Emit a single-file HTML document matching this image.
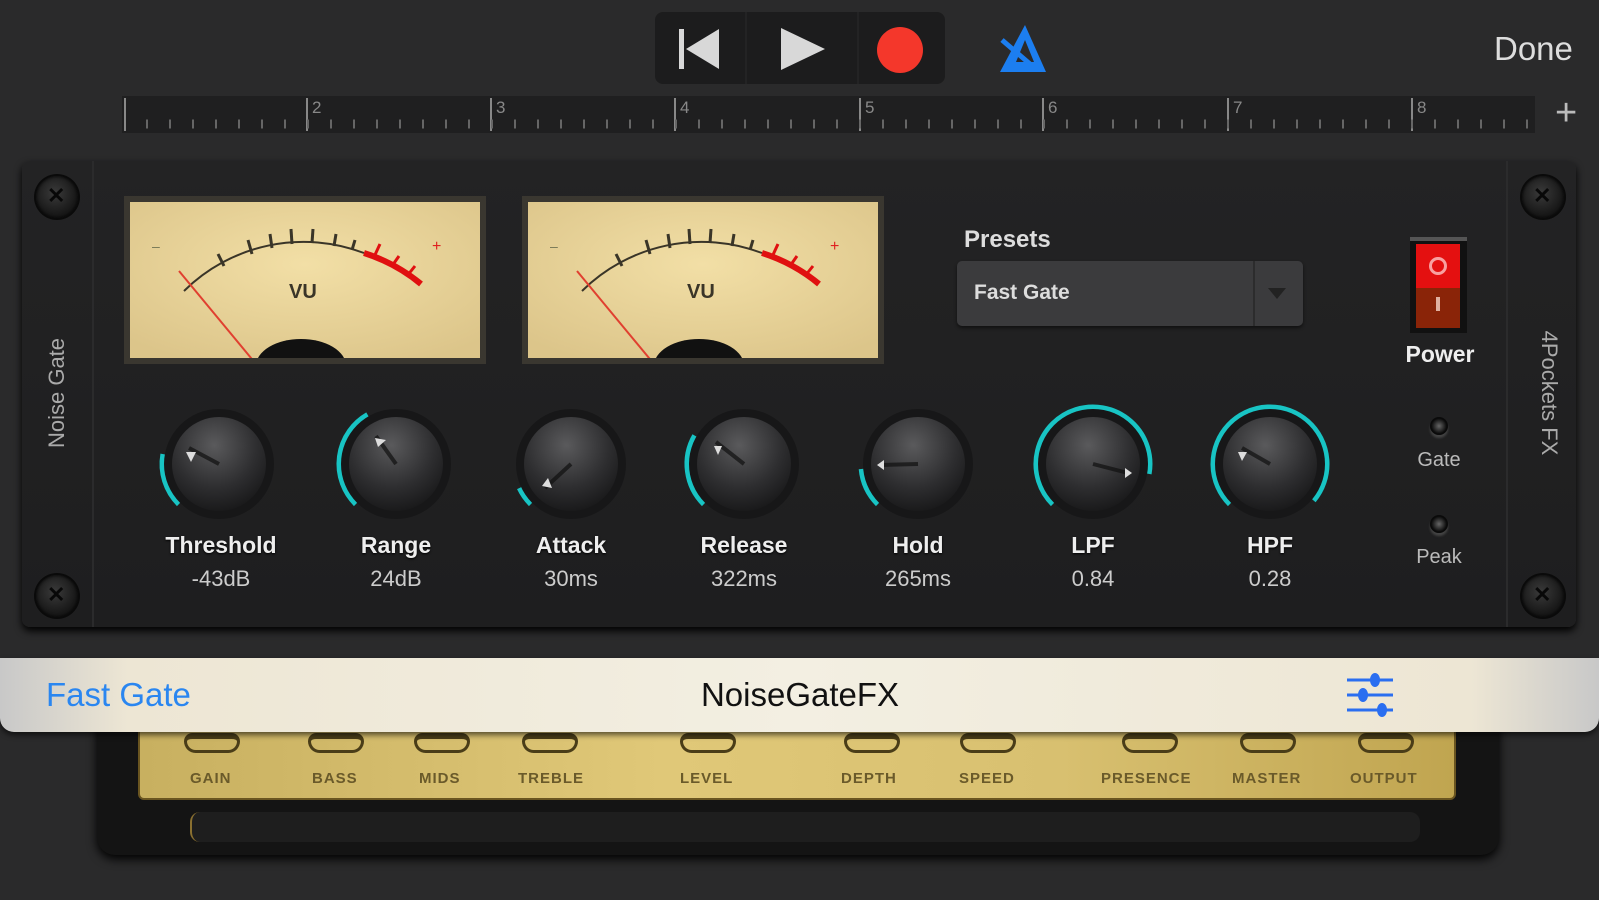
<!DOCTYPE html>
<html><head><meta charset="utf-8"><style>
*{margin:0;padding:0;box-sizing:border-box}
body{width:1599px;height:900px;background:#2a2a2b;position:relative;overflow:hidden;font-family:"Liberation Sans",sans-serif}
.a{position:absolute}
.lbl{position:absolute;color:#eee;font-weight:bold;font-size:23px;text-align:center;width:160px;text-shadow:0 1px 2px #000}
.val{position:absolute;color:#ccc;font-size:22px;text-align:center;width:160px}
.screw{position:absolute;width:42px;height:42px;border-radius:50%;background:radial-gradient(circle at 45% 40%,#3a3a3a,#1a1a1a 60%,#0c0c0c);box-shadow:0 0 0 2px #0a0a0a,inset 0 0 3px #000}
.screw:after{content:"✕";position:absolute;left:11px;top:7px;color:#080808;font-size:22px;font-weight:bold}
.amplbl{position:absolute;top:770px;font-size:15px;font-weight:bold;color:#6a5a2a;letter-spacing:1px}
.pot{position:absolute;top:733px;width:56px;height:20px;border:3px solid #4a3d18;border-top:6px solid #4a3d18;border-radius:10px 10px 14px 14px}
</style></head><body>
<div class="a" style="left:655px;top:12px;width:290px;height:72px;background:#1c1c1d;border-radius:8px"></div>
<div class="a" style="left:745px;top:12px;width:2px;height:72px;background:#232324"></div>
<div class="a" style="left:857px;top:12px;width:2px;height:72px;background:#232324"></div>
<svg class="a" style="left:0;top:0" width="1599" height="100">
<rect x="679" y="29" width="5" height="40" fill="#d8d8d8"/><polygon points="719,29 719,69 686,49" fill="#d8d8d8"/>
<polygon points="781,28 781,70 825,49" fill="#d8d8d8"/>
<circle cx="900" cy="50" r="23" fill="#f4372b"/>
<polygon points="1025,25 1046,72 1000,72" fill="#1c7ef0"/>
<polygon points="1025,40 1034,62 1016,62" fill="#2a2a2b"/>
<line x1="1002" y1="40" x2="1030" y2="64" stroke="#1c7ef0" stroke-width="5"/>
</svg>
<div class="a" style="left:1494px;top:30px;color:#ddd;font-size:33px">Done</div>
<div class="a" style="left:122px;top:96px;width:1413px;height:37px;background:#1f1f20"></div>
<svg class="a" style="left:0;top:96px" width="1599" height="40">
<g stroke="#888" stroke-width="2">
<line x1="125" y1="2" x2="125" y2="35"/><line x1="307" y1="2" x2="307" y2="35"/><line x1="491" y1="2" x2="491" y2="35"/><line x1="675" y1="2" x2="675" y2="35"/><line x1="860" y1="2" x2="860" y2="35"/><line x1="1043" y1="2" x2="1043" y2="35"/><line x1="1228" y1="2" x2="1228" y2="35"/><line x1="1412" y1="2" x2="1412" y2="35"/>
</g>
<g stroke="#666" stroke-dasharray="2 21">
<line x1="146" y1="28" x2="1530" y2="28" stroke-width="9"/>
</g>
<g fill="#888" font-size="17"><text x="312" y="17">2</text><text x="496" y="17">3</text><text x="680" y="17">4</text><text x="865" y="17">5</text><text x="1048" y="17">6</text><text x="1233" y="17">7</text><text x="1417" y="17">8</text></g>
</svg>
<div class="a" style="left:1555px;top:92px;color:#bbb;font-size:38px">+</div>
<div class="a" style="left:22px;top:161px;width:1554px;height:466px;background:linear-gradient(#232324,#1e1e1f);border-radius:8px;box-shadow:0 4px 8px #000"></div>
<div class="a" style="left:92px;top:161px;width:2px;height:466px;background:#2b2b2c"></div>
<div class="a" style="left:1506px;top:161px;width:2px;height:466px;background:#2b2b2c"></div>
<div class="screw" style="left:36px;top:176px"></div><div class="screw" style="left:36px;top:575px"></div>
<div class="screw" style="left:1522px;top:176px"></div><div class="screw" style="left:1522px;top:575px"></div>
<div class="a" style="left:-3px;top:380px;width:120px;transform:rotate(-90deg);color:#aaa;font-size:22px;text-align:center">Noise Gate</div>
<div class="a" style="left:1479px;top:380px;width:140px;transform:rotate(90deg);color:#aaa;font-size:22px;text-align:center">4Pockets FX</div>
<svg class="a" style="left:124px;top:196px" width="362" height="168">
<defs><radialGradient id="vg" cx="50%" cy="40%" r="70%"><stop offset="0" stop-color="#f2dfa6"/><stop offset="1" stop-color="#dcc58a"/></radialGradient><clipPath id="vc"><rect x="6" y="6" width="350" height="156"/></clipPath></defs>
<rect width="362" height="168" fill="#3a3730"/><rect x="6" y="6" width="350" height="156" fill="url(#vg)"/>
<g clip-path="url(#vc)">
<path d="M60,95 A170,170 0 0 1 240,57" fill="none" stroke="#3a3528" stroke-width="2"/>
<path d="M240,57 A170,170 0 0 1 297,88" fill="none" stroke="#e01010" stroke-width="6"/>
<g stroke="#3a3528" stroke-width="3"><line x1="100" y1="70" x2="94" y2="58"/><line x1="128" y1="58" x2="124" y2="44"/><line x1="148" y1="52" x2="146" y2="38"/><line x1="168" y1="48" x2="167" y2="33"/><line x1="188" y1="47" x2="189" y2="33"/><line x1="210" y1="50" x2="212" y2="38"/><line x1="228" y1="54" x2="231" y2="44"/></g>
<g stroke="#e01010" stroke-width="3"><line x1="250" y1="61" x2="256" y2="48"/><line x1="268" y1="70" x2="275" y2="60"/><line x1="283" y1="80" x2="291" y2="70"/></g>
<text x="165" y="102" font-size="20" font-weight="bold" fill="#3a3528">VU</text>
<text x="28" y="55" font-size="14" fill="#775">–</text><text x="308" y="55" font-size="16" fill="#e02020">+</text>
<line x1="55" y1="75" x2="132" y2="168" stroke="#e04030" stroke-width="2"/>
<ellipse cx="177" cy="170" rx="45" ry="27" fill="#111"/>
</g></svg>
<svg class="a" style="left:522px;top:196px" width="362" height="168">
<rect width="362" height="168" fill="#3a3730"/><rect x="6" y="6" width="350" height="156" fill="url(#vg)"/>
<g clip-path="url(#vc)">
<path d="M60,95 A170,170 0 0 1 240,57" fill="none" stroke="#3a3528" stroke-width="2"/>
<path d="M240,57 A170,170 0 0 1 297,88" fill="none" stroke="#e01010" stroke-width="6"/>
<g stroke="#3a3528" stroke-width="3"><line x1="100" y1="70" x2="94" y2="58"/><line x1="128" y1="58" x2="124" y2="44"/><line x1="148" y1="52" x2="146" y2="38"/><line x1="168" y1="48" x2="167" y2="33"/><line x1="188" y1="47" x2="189" y2="33"/><line x1="210" y1="50" x2="212" y2="38"/><line x1="228" y1="54" x2="231" y2="44"/></g>
<g stroke="#e01010" stroke-width="3"><line x1="250" y1="61" x2="256" y2="48"/><line x1="268" y1="70" x2="275" y2="60"/><line x1="283" y1="80" x2="291" y2="70"/></g>
<text x="165" y="102" font-size="20" font-weight="bold" fill="#3a3528">VU</text>
<text x="28" y="55" font-size="14" fill="#775">–</text><text x="308" y="55" font-size="16" fill="#e02020">+</text>
<line x1="55" y1="75" x2="132" y2="168" stroke="#e04030" stroke-width="2"/>
<ellipse cx="177" cy="170" rx="45" ry="27" fill="#111"/>
</g></svg>
<div class="a" style="left:964px;top:226px;color:#ddd;font-weight:bold;font-size:24px">Presets</div>
<div class="a" style="left:957px;top:261px;width:346px;height:65px;background:#3b3b3d;border-radius:5px;box-shadow:0 2px 3px #111"></div>
<div class="a" style="left:1253px;top:261px;width:2px;height:65px;background:#2c2c2d"></div>
<div class="a" style="left:974px;top:281px;color:#ddd;font-weight:bold;font-size:21px">Fast Gate</div>
<div class="a" style="left:1268px;top:288px;width:0;height:0;border-left:9px solid transparent;border-right:9px solid transparent;border-top:11px solid #222"></div>
<div class="a" style="left:1410px;top:237px;width:57px;height:96px;background:#111;border-top:4px solid #555"></div>
<div class="a" style="left:1416px;top:244px;width:44px;height:44px;background:#e41010"></div>
<div class="a" style="left:1416px;top:288px;width:44px;height:40px;background:#8a2408"></div>
<div class="a" style="left:1429px;top:257px;width:18px;height:18px;border:3px solid #f8a0a0;border-radius:50%"></div>
<div class="a" style="left:1436px;top:297px;width:4px;height:14px;background:#e0b0a0"></div>
<div class="a" style="left:1390px;top:341px;width:100px;text-align:center;color:#eee;font-weight:bold;font-size:23px">Power</div>
<div class="a" style="left:1430px;top:417px;width:18px;height:18px;border-radius:50%;background:radial-gradient(#666,#0a0a0a 60%);box-shadow:0 3px 2px #444"></div>
<div class="a" style="left:1399px;top:449px;width:80px;text-align:center;color:#bbb;font-size:20px">Gate</div>
<div class="a" style="left:1430px;top:515px;width:18px;height:18px;border-radius:50%;background:radial-gradient(#666,#0a0a0a 60%);box-shadow:0 3px 2px #444"></div>
<div class="a" style="left:1399px;top:546px;width:80px;text-align:center;color:#bbb;font-size:20px">Peak</div>
<svg class="a" style="left:0;top:0" width="1599" height="640">
<defs><radialGradient id="kg" cx="45%" cy="30%" r="75%"><stop offset="0" stop-color="#5a5a5c"/><stop offset=".6" stop-color="#2e2e30"/><stop offset="1" stop-color="#161617"/></radialGradient></defs>
<g fill="none" stroke="#18c4c4" stroke-width="5">
<path d="M178.7,504.3 A57,57 0 0 1 162.9,454.1"/>
<path d="M355.7,504.3 A57,57 0 0 1 367.5,414.6"/>
<path d="M530.7,504.3 A57,57 0 0 1 519.3,488.1"/>
<path d="M703.7,504.3 A57,57 0 0 1 694.6,435.5"/>
<path d="M877.7,504.3 A57,57 0 0 1 861.2,469"/>
<path d="M1052.7,504.3 A57,57 0 1 1 1149.1,473.9"/>
<path d="M1229.7,504.3 A57,57 0 1 1 1313.7,500.6"/>
</g>
<g>
<circle cx="219" cy="464" r="55" fill="#171718"/><circle cx="219" cy="464" r="47" fill="url(#kg)"/>
<circle cx="396" cy="464" r="55" fill="#171718"/><circle cx="396" cy="464" r="47" fill="url(#kg)"/>
<circle cx="571" cy="464" r="55" fill="#171718"/><circle cx="571" cy="464" r="47" fill="url(#kg)"/>
<circle cx="744" cy="464" r="55" fill="#171718"/><circle cx="744" cy="464" r="47" fill="url(#kg)"/>
<circle cx="918" cy="464" r="55" fill="#171718"/><circle cx="918" cy="464" r="47" fill="url(#kg)"/>
<circle cx="1093" cy="464" r="55" fill="#171718"/><circle cx="1093" cy="464" r="47" fill="url(#kg)"/>
<circle cx="1270" cy="464" r="55" fill="#171718"/><circle cx="1270" cy="464" r="47" fill="url(#kg)"/>
</g>
<g stroke="#101010" stroke-width="4" opacity=".7">
<line x1="219" y1="464" x2="189" y2="448"/><line x1="396" y1="464" x2="376" y2="436"/><line x1="571" y1="464" x2="545" y2="488"/><line x1="744" y1="464" x2="716" y2="442"/><line x1="918" y1="464" x2="880" y2="465"/><line x1="1093" y1="464" x2="1128" y2="473"/><line x1="1270" y1="464" x2="1242" y2="448"/>
</g>
<g fill="#ddd">
<polygon points="186,452 196,452 191,462"/>
<polygon points="375,438 386,440 378,447"/>
<polygon points="542,486 548,478 552,488"/>
<polygon points="714,446 722,446 718,455"/>
<polygon points="884,460 884,470 877,465"/>
<polygon points="1125,468 1125,478 1132,473"/>
<polygon points="1238,452 1247,452 1242,461"/>
</g>
</svg>
<div class="lbl" style="left:141px;top:532px">Threshold</div><div class="val" style="left:141px;top:566px">-43dB</div>
<div class="lbl" style="left:316px;top:532px">Range</div><div class="val" style="left:316px;top:566px">24dB</div>
<div class="lbl" style="left:491px;top:532px">Attack</div><div class="val" style="left:491px;top:566px">30ms</div>
<div class="lbl" style="left:664px;top:532px">Release</div><div class="val" style="left:664px;top:566px">322ms</div>
<div class="lbl" style="left:838px;top:532px">Hold</div><div class="val" style="left:838px;top:566px">265ms</div>
<div class="lbl" style="left:1013px;top:532px">LPF</div><div class="val" style="left:1013px;top:566px">0.84</div>
<div class="lbl" style="left:1190px;top:532px">HPF</div><div class="val" style="left:1190px;top:566px">0.28</div>
<div class="a" style="left:97px;top:700px;width:1402px;height:155px;background:#141414;border-radius:0 0 18px 18px;box-shadow:0 4px 10px #000"></div>
<div class="a" style="left:138px;top:700px;width:1318px;height:100px;background:linear-gradient(90deg,#c8b060,#e0c878 40%,#d8c070 70%,#c0a550);border-radius:0 0 6px 6px;border:2px solid #6a5520"></div>
<div class="a" style="left:190px;top:812px;width:1230px;height:30px;background:#1e1e1e;border-radius:10px;border-left:2px solid #8a7030"></div>
<div class="pot" style="left:184px"></div><div class="pot" style="left:308px"></div><div class="pot" style="left:414px"></div><div class="pot" style="left:522px"></div><div class="pot" style="left:680px"></div><div class="pot" style="left:844px"></div><div class="pot" style="left:960px"></div><div class="pot" style="left:1122px"></div><div class="pot" style="left:1240px"></div><div class="pot" style="left:1358px"></div>
<div class="amplbl" style="left:190px">GAIN</div><div class="amplbl" style="left:312px">BASS</div><div class="amplbl" style="left:419px">MIDS</div><div class="amplbl" style="left:518px">TREBLE</div><div class="amplbl" style="left:680px">LEVEL</div><div class="amplbl" style="left:841px">DEPTH</div><div class="amplbl" style="left:959px">SPEED</div><div class="amplbl" style="left:1101px">PRESENCE</div><div class="amplbl" style="left:1232px">MASTER</div><div class="amplbl" style="left:1350px">OUTPUT</div>
<div class="a" style="left:0;top:658px;width:1599px;height:74px;background:linear-gradient(90deg,#c8c8c8,#ede6d4 8%,#f3efe2 50%,#ede6d4 92%,#c8c8c8);border-radius:0 0 14px 14px;box-shadow:0 3px 6px rgba(0,0,0,.6)"></div>
<div class="a" style="left:46px;top:676px;color:#2a86f0;font-size:33px">Fast Gate</div>
<div class="a" style="left:600px;top:676px;width:400px;text-align:center;color:#111;font-size:33px">NoiseGateFX</div>
<svg class="a" style="left:1345px;top:670px" width="52" height="50">
<g stroke="#2a6ef0" stroke-width="3"><line x1="2" y1="10" x2="48" y2="10"/><line x1="2" y1="25" x2="48" y2="25"/><line x1="2" y1="40" x2="48" y2="40"/></g>
<g fill="#2a6ef0"><ellipse cx="30" cy="10" rx="5" ry="7"/><ellipse cx="18" cy="25" rx="5" ry="7"/><ellipse cx="37" cy="40" rx="5" ry="7"/></g>
</svg>
</body></html>
